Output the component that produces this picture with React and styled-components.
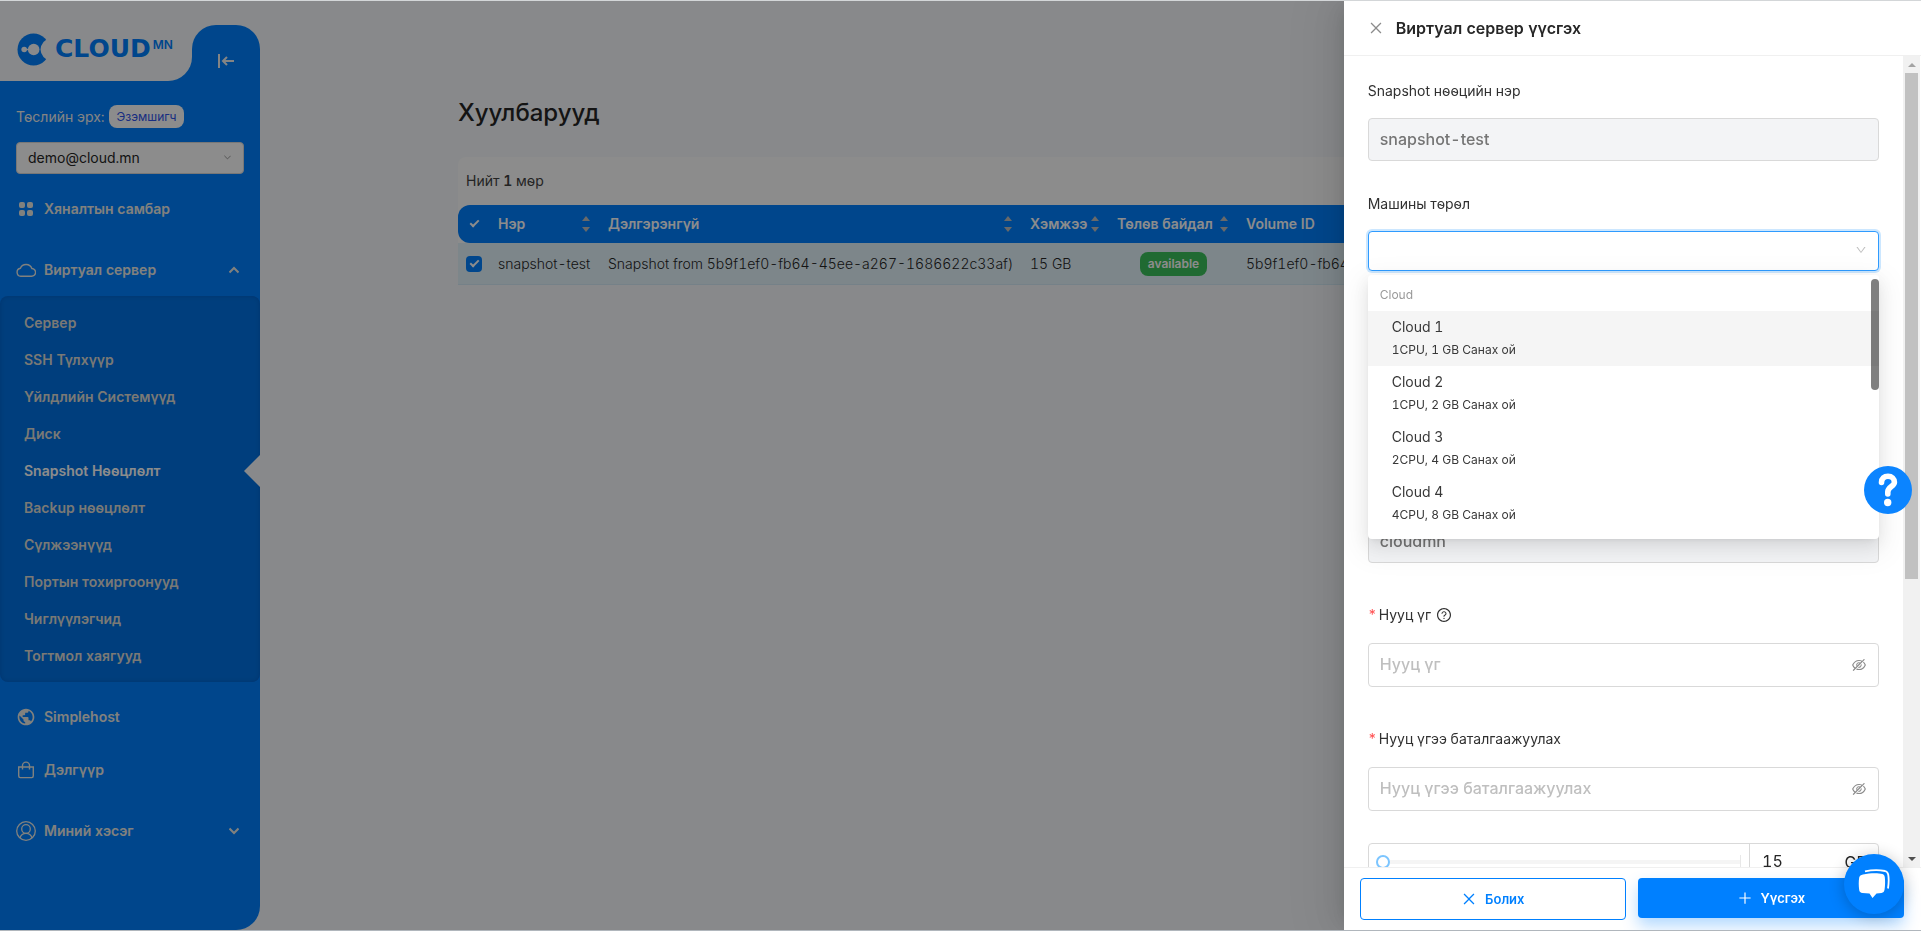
import React from "react";
import styled, { createGlobalStyle, css } from "styled-components";
import {
  AiOutlineClose,
  AiOutlineDown,
  AiOutlineEyeInvisible,
  AiOutlinePlus,
  AiOutlineQuestionCircle,
} from "react-icons/ai";
import { MdPublic } from "react-icons/md";

const blue = "#0080ff";
const pageBg = "#f7fafd";

const GlobalStyle = createGlobalStyle`
  *, *::before, *::after { box-sizing: border-box; }
  body {
    margin: 0;
    background: ${pageBg};
    font-family: Inter, "Noto Sans", sans-serif;
    font-size: 14px;
    font-variant-numeric: tabular-nums;
    line-height: 22px;
    color: #262626;
    overflow: hidden;
  }
  button, input, select { font: inherit; color: inherit; }
  svg { display: block; flex: none; }
`;

const Page = styled.div`
  display: flex;
  height: 100vh;
  padding: 1px 0;
  overflow: hidden;
`;

const EdgeLine = styled.div`
  position: fixed;
  left: 0;
  right: 0;
  z-index: 30;
  height: 1px;
  background: ${(p) => p.$color};
  ${(p) => (p.$bottom ? "bottom: 0;" : "top: 0;")}
`;

/* ---------- Sidebar ---------- */

const Sidebar = styled.aside`
  display: flex;
  flex-direction: column;
  flex: none;
  width: 260px;
`;

const SidebarTop = styled.div`
  display: flex;
  align-items: flex-end;
  height: 80px;
`;

const LogoCorner = styled.div`
  flex: 1;
  height: 100%;
  background: linear-gradient(${pageBg} 50%, ${blue} 50%);
`;

const Logo = styled.a`
  display: flex;
  align-items: center;
  height: 100%;
  padding: 16px 0 0 17px;
  background: ${pageBg};
  border-bottom-right-radius: 24px;
  color: ${blue};
  text-decoration: none;
`;

const LogoWord = styled.span`
  margin-left: 5px;
  font-family: "DejaVu Sans", sans-serif;
  font-size: 25px;
  font-weight: 700;
  line-height: 32px;
`;

const LogoSuffix = styled.span`
  margin: 0 0 8px 2px;
  font-size: 12px;
  font-weight: 600;
  line-height: 12px;
`;

const CollapseTab = styled.button`
  display: flex;
  align-items: center;
  justify-content: center;
  width: 68px;
  height: 56px;
  padding: 16px 0 0;
  border: 0;
  border-radius: 24px 24px 0 0;
  background: ${blue};
  color: #f0f0f0;
`;

const SidebarBody = styled.div`
  flex: 1;
  padding-top: 24px;
  background: ${blue};
  border-bottom-right-radius: 24px;
`;

const RoleRow = styled.div`
  display: flex;
  align-items: center;
  gap: 4px;
  padding: 0 16px;
  color: #f0f0f0;
`;

const RoleBadge = styled.span`
  padding: 0 8px;
  border-radius: 8px;
  background: #fff;
  color: #2f54eb;
  font-size: 12px;
  line-height: 23px;
`;

const ProjectBox = styled.div`
  position: relative;
  margin: 14px 16px 8px;
  color: #737373;
  svg {
    position: absolute;
    right: 13px;
    top: 12px;
    pointer-events: none;
  }
`;

const ProjectSelect = styled.select`
  display: block;
  appearance: none;
  width: 100%;
  height: 32px;
  padding: 0 11px;
  border: 1px solid #d9d9d9;
  border-radius: 4px;
  background: #fff;
  color: #262626;
`;

const NavLink = styled.a`
  display: flex;
  align-items: center;
  gap: 8px;
  height: 53px;
  padding: 0 21px 0 16px;
  color: #ecebe6;
  font-weight: 600;
  text-decoration: none;
  span { flex: 1; }
`;

const NavGroup = styled.div`
  margin: 8px 0;
`;

const SubMenu = styled.div`
  padding: 8px 0;
  border-radius: 8px;
  background: #0072e3;
  box-shadow: inset 0 0 4px rgba(0, 40, 120, 0.25);
`;

const SubLink = styled.a`
  display: flex;
  align-items: center;
  justify-content: space-between;
  height: 37px;
  padding-left: 24px;
  color: ${(p) => (p.$active ? "#fff" : "#dedcd6")};
  font-weight: 600;
  text-decoration: none;
  &::after {
    content: "";
    display: ${(p) => (p.$active ? "block" : "none")};
    border: 16px solid transparent;
    border-left-width: 0;
    border-right-color: ${pageBg};
  }
`;

/* ---------- Main table ---------- */

const Main = styled.main`
  flex: 1;
  min-width: 0;
  padding: 96px 198px 0;
`;

const Title = styled.h1`
  margin: 0 0 28px;
  font-size: 24px;
  font-weight: 500;
  line-height: 32px;
`;

const Card = styled.section`
  overflow: hidden;
  border-radius: 8px 8px 0 0;
  background: #fff;
`;

const Count = styled.p`
  margin: 0;
  padding: 13px 8px;
  color: #434343;
  b { font-weight: 600; }
`;

const Table = styled.table`
  width: 100%;
  border-collapse: separate;
  border-spacing: 0;
  table-layout: fixed;
  text-align: left;
`;

const Col = styled.col`
  width: ${(p) => (p.$w ? p.$w + "px" : "auto")};
`;

const Th = styled.th`
  height: 38px;
  padding: 0 10px 0 8px;
  background: ${blue};
  color: #fff;
  font-weight: 600;
  white-space: nowrap;
  &:first-child { border-radius: 12px 0 0 12px; padding-right: 8px; }
  &:last-child { border-radius: 0 12px 12px 0; }
`;

const ThInner = styled.div`
  display: flex;
  align-items: center;
  justify-content: space-between;
`;

const Sorter = styled.span`
  display: grid;
  gap: 6px;
  color: #bfbfbf;
  &::before, &::after {
    content: "";
    border: 4px solid transparent;
  }
  &::before { border-top: 0; border-bottom: 5px solid; }
  &::after { border-bottom: 0; border-top: 5px solid; }
`;

const Td = styled.td`
  height: 42px;
  padding: 0 8px;
  border-bottom: 1px solid #d5ecf7;
  background: #e4f4fb;
  color: #262626;
  font-weight: 300;
  white-space: nowrap;
  text-align: ${(p) => (p.$center ? "center" : "left")};
`;

const Tick = styled.input`
  display: flex;
  justify-content: center;
  appearance: none;
  width: 16px;
  height: 16px;
  margin: 0;
  border-radius: 4px;
  background: ${blue};
  &::after {
    content: "";
    width: 5px;
    height: 9px;
    margin-top: 2px;
    border: solid #fff;
    border-width: 0 2px 2px 0;
    transform: rotate(45deg);
  }
`;

const Status = styled.span`
  display: inline-block;
  padding: 0 8px;
  border-radius: 8px;
  background: #3bc25b;
  color: #fff;
  font-size: 12px;
  font-weight: 600;
  line-height: 24px;
`;

/* ---------- Drawer ---------- */

const Mask = styled.div`
  position: fixed;
  inset: 0;
  z-index: 10;
  background: rgba(0, 0, 0, 0.45);
`;

const Drawer = styled.section`
  position: fixed;
  top: 1px;
  right: 0;
  bottom: 1px;
  z-index: 20;
  display: flex;
  flex-direction: column;
  width: calc(30% + 1px);
  min-width: 400px;
  background: #fff;
  box-shadow: -6px 0 16px -8px rgba(0, 0, 0, 0.12), -9px 0 28px rgba(0, 0, 0, 0.08),
    -12px 0 48px 16px rgba(0, 0, 0, 0.05);
`;

const DrawerHead = styled.header`
  display: flex;
  align-items: center;
  gap: 12px;
  flex: none;
  height: 55px;
  padding: 0 24px;
  border-bottom: 1px solid #f0f0f0;
  h2 {
    margin: 0;
    font-size: 16px;
    font-weight: 600;
  }
`;

const CloseButton = styled.button`
  padding: 0;
  border: 0;
  background: none;
  color: #8c8c8c;
`;

const DrawerMain = styled.div`
  display: flex;
  flex: 1;
  min-height: 0;
`;

const Form = styled.form`
  flex: 1;
  min-width: 0;
  padding: 24px 24px 0;
  overflow: hidden;
`;

const Scrollbar = styled.div`
  display: flex;
  flex-direction: column;
  align-items: center;
  flex: none;
  width: 17px;
  margin-right: 1px;
  padding: 7px 0 6px;
  background: #f1f1f1;
`;

const ScrollArrow = styled.i`
  border: 4px solid transparent;
  ${(p) =>
    p.$down
      ? css`border-bottom: 0; border-top-color: #505050;`
      : css`border-top: 0; border-bottom-color: #a3a3a3;`}
`;

const ScrollTrack = styled.div`
  flex: 1;
  width: 13px;
  margin: 6px 0;
  &::before {
    content: "";
    display: block;
    height: 65%;
    background: #c1c1c1;
  }
`;

const Field = styled.div`
  position: relative;
  margin-bottom: ${(p) => (p.$menuOpen ? 249 : 32)}px;
`;

const labelStyles = css`
  display: flex;
  align-items: center;
  gap: 5px;
  color: #303030;
`;

const Label = styled.label`
  ${labelStyles}
  height: 22px;
  margin-bottom: 16px;
`;

const RequiredLabel = styled.label`
  ${labelStyles}
  height: 40px;
  margin-bottom: 8px;
  &::before {
    content: "*";
    width: 6px;
    color: #ff4d4f;
  }
`;

const InputBox = styled.div`
  display: flex;
  align-items: center;
  height: ${(p) => (p.$disabled ? 43 : 44)}px;
  padding: 0 11px;
  border: 1px solid #d9d9d9;
  border-radius: 4px;
  background: ${(p) => (p.$disabled ? "#f3f4f6" : "#fff")};
  color: #8c8c8c;
`;

const Input = styled.input`
  flex: 1;
  min-width: 0;
  width: 100%;
  padding: 0 0 2px;
  border: 0;
  outline: 0;
  background: none;
  font-size: 16px;
  line-height: 20px;
  color: #262626;
  &:disabled { color: #757575; font-weight: 500; }
  &::placeholder { color: #bfbfbf; opacity: 1; font-weight: 500; }
`;

const EyeButton = styled.button`
  padding: 0;
  border: 0;
  background: none;
  color: #8c8c8c;
`;

const TypeBox = styled.div`
  position: relative;
  color: #bfbfbf;
  svg {
    position: absolute;
    right: 12px;
    top: 13px;
    pointer-events: none;
  }
`;

const TypeSelect = styled.select`
  display: block;
  appearance: none;
  width: 100%;
  height: 40px;
  border: 1px solid #2f9bff;
  border-radius: 4px;
  outline: 0;
  background: #fff;
  box-shadow: 0 0 0 2px rgba(24, 144, 255, 0.22);
`;

const Menu = styled.div`
  position: absolute;
  top: calc(100% + 4px);
  left: 0;
  right: 0;
  z-index: 2;
  height: 264px;
  padding: 4px 0;
  overflow: hidden;
  border-radius: 4px;
  background: #fff;
  box-shadow: 0 3px 6px -4px rgba(0, 0, 0, 0.12), 0 6px 16px rgba(0, 0, 0, 0.08),
    0 9px 28px 8px rgba(0, 0, 0, 0.05);
  &::after {
    content: "";
    position: absolute;
    top: 4px;
    right: 0;
    width: 8px;
    height: 111px;
    border-radius: 4px;
    background: rgba(0, 0, 0, 0.5);
  }
`;

const MenuGroup = styled.div`
  padding: 5px 12px;
  color: #999;
  font-size: 12px;
`;

const MenuOption = styled.div`
  height: 55px;
  padding: 5px 24px;
  background: ${(p) => (p.$active ? "#f5f5f5" : "#fff")};
  color: #383838;
  small {
    display: block;
    font-size: 12px;
    line-height: 24px;
  }
`;

const SizeRow = styled.div`
  display: grid;
  grid-template-columns: 1fr 129px;
  height: 43px;
  border: 1px solid #d9d9d9;
  border-radius: 4px;
`;

const RangeWrap = styled.div`
  display: flex;
  align-items: center;
  padding: 0 8px 6px 7px;
`;

const Range = styled.input`
  appearance: none;
  width: 100%;
  height: 14px;
  margin: 0;
  border-right: 1px solid #e8e8e8;
  background: linear-gradient(#f5f5f5, #f5f5f5) center / 100% 4px no-repeat;
  &::-webkit-slider-thumb {
    appearance: none;
    width: 14px;
    height: 14px;
    border: 2px solid #7cc5ff;
    border-radius: 50%;
    background: #fff;
  }
`;

const SizeValue = styled.label`
  display: flex;
  align-items: center;
  padding: 0 11px 6px 12px;
  border-left: 1px solid #d9d9d9;
  font-size: 16px;
  line-height: 20px;
`;

const DrawerFoot = styled.footer`
  display: grid;
  grid-template-columns: 1fr 1fr;
  gap: 12px;
  align-items: start;
  flex: none;
  height: 63px;
  padding: 10px 17px 0 16px;
  border-top: 1px solid #f0f0f0;
`;

const FootButton = styled.button`
  display: flex;
  align-items: center;
  justify-content: center;
  gap: 8px;
  height: ${(p) => (p.$primary ? 40 : 42)}px;
  padding: 0;
  border: ${(p) => (p.$primary ? "0" : "1px solid " + blue)};
  border-radius: 4px;
  background: ${(p) => (p.$primary ? blue : "#fff")};
  box-shadow: ${(p) => (p.$primary ? "0 8px 16px rgba(0, 128, 255, 0.3)" : "none")};
  color: ${(p) => (p.$primary ? "#fff" : blue)};
  font-size: 13px;
  font-weight: 600;
`;

const FloatButton = styled.button`
  position: fixed;
  z-index: 40;
  display: grid;
  place-items: center;
  width: ${(p) => p.$size}px;
  height: ${(p) => p.$size}px;
  padding: 0;
  border: 0;
  border-radius: 50%;
  color: #fff;
`;

const HelpButton = styled(FloatButton)`
  top: 50%;
  right: 9px;
  background: #0b84ff;
`;

const ChatButton = styled(FloatButton)`
  right: 17px;
  bottom: 17px;
  background: ${blue};
  box-shadow: 0 2px 16px rgba(0, 0, 0, 0.24);
`;

/* ---------- Drawings ---------- */

const LogoMark = () => (
  <svg width="33" height="33" viewBox="0 0 33 33">
    <circle cx="16.5" cy="16.5" r="16" fill="currentColor" />
    <path d="M34 1 29.6 6.5 26.5 9Q20.500 16.5 26.5 24L29.6 26.5 34 32Z" fill={pageBg} />
    <circle cx="16.7" cy="16.5" r="5.8" fill={pageBg} />
    <circle cx="7.2" cy="16.5" r="2.8" fill={pageBg} />
    <path d="M8 16.5H13" stroke={pageBg} strokeWidth="1.4" />
  </svg>
);

const CollapseIcon = () => (
  <svg width="16" height="14" viewBox="0 0 16 14" fill="none" stroke="currentColor" strokeWidth="2">
    <path d="M1 0V14M16 7H5M9 3L5 7L9 11" />
  </svg>
);

const Chevron = ({ up, size = 10, width = 2 }) => (
  <svg width={size} height={size} viewBox="0 0 10 10" fill="none" stroke="currentColor" strokeWidth={width}>
    <path d={up ? "M.5 7.5 5 3 9.5 7.5" : "M.5 2.5 5 7 9.5 2.5"} />
  </svg>
);

const GridIcon = () => (
  <svg width="20" height="20" viewBox="0 0 20 20" fill="currentColor">
    <rect x="3" y="3" width="6" height="6" rx="2" />
    <rect x="11" y="3" width="6" height="6" rx="2" />
    <rect x="3" y="11" width="6" height="6" rx="2" />
    <rect x="11" y="11" width="6" height="6" rx="2" />
  </svg>
);

const CloudIcon = () => (
  <svg width="20" height="20" viewBox="0 0 20 20" fill="none" stroke="currentColor" strokeWidth="1.4">
    <path d="M4.8 16.3h10.6a3.9 3.9 0 0 0 .5-7.8 6.2 6.2 0 0 0-11.5-.3A4.1 4.1 0 0 0 4.8 16.3Z" />
  </svg>
);

const BagIcon = () => (
  <svg width="20" height="20" viewBox="0 0 20 20" fill="none" stroke="currentColor" strokeWidth="1.4">
    <path d="M2.7 7H17.3V15.8Q17.3 17.6 15.8 17.6H4.2Q2.7 17.6 2.7 15.8ZM6.5 9.5V5.6a3.5 3.5 0 0 1 7 0V9.5" />
  </svg>
);

const UserIcon = () => (
  <svg width="20" height="20" viewBox="0 0 20 20" fill="none" stroke="currentColor" strokeWidth="1.3">
    <circle cx="10" cy="10" r="9.3" />
    <circle cx="10" cy="8" r="4.3" />
    <path d="M4 17Q5.4 12.4 10 12.4T16 17" />
  </svg>
);

const HelpGlyph = () => (
  <svg width="20" height="34" viewBox="0 0 20 34" fill="none" stroke="currentColor">
    <path d="M3.5 9.5C3.5 5.5 6.2 3.3 10 3.3S16.4 5.8 16.4 9.2C16.4 13.5 9.8 13.8 9.8 19V21" strokeWidth="5.6" strokeLinecap="round" />
    <circle cx="9.7" cy="29.5" r="3.7" fill="currentColor" stroke="none" />
  </svg>
);

const ChatGlyph = () => (
  <svg width="32" height="32" viewBox="0 0 32 32" fill="currentColor">
    <path d="M5 6.5C12 5 20 5 24.5 6Q26.5 6.5 26.8 9C27.3 13 27.2 18 26.5 22Q26.3 24.5 23.5 25L18.5 25.6 14.5 30 11.5 25.6 4.5 25Q1.5 24.6 1.2 22C.6 18 .6 13 1.2 9.5Q1.7 7 5 6.5Z" />
    <path d="M7 3.4C14 1.8 22 1.9 27 3Q29.7 3.7 30.2 6.5C31 11 30.7 16 30 20.5" fill="none" stroke="currentColor" strokeWidth="1.8" />
  </svg>
);

/* ---------- Data ---------- */

const subItems = [
  "Сервер",
  "SSH Түлхүүр",
  "Үйлдлийн Системүүд",
  "Диск",
  "Snapshot Нөөцлөлт",
  "Backup нөөцлөлт",
  "Сүлжээнүүд",
  "Портын тохиргоонууд",
  "Чиглүүлэгчид",
  "Тогтмол хаягууд",
];

const columns = ["Нэр", "Дэлгэрэнгүй", "Хэмжээ", "Төлөв байдал"];

const machineTypes = [
  ["Cloud 1", "1CPU, 1 GB Санах ой"],
  ["Cloud 2", "1CPU, 2 GB Санах ой"],
  ["Cloud 3", "2CPU, 4 GB Санах ой"],
  ["Cloud 4", "4CPU, 8 GB Санах ой"],
];

const PasswordField = ({ id, label, help }) => (
  <Field>
    <RequiredLabel htmlFor={id}>
      {label}
      {help && <AiOutlineQuestionCircle size={16} />}
    </RequiredLabel>
    <InputBox>
      <Input id={id} type="password" placeholder={label} />
      <EyeButton type="button" aria-label={label}>
        <AiOutlineEyeInvisible size={16} />
      </EyeButton>
    </InputBox>
  </Field>
);

export default function App() {
  return (
    <>
      <GlobalStyle />
      <Page>
        <Sidebar>
          <SidebarTop>
            <LogoCorner>
              <Logo href="#">
                <LogoMark />
                <LogoWord>CLOUD</LogoWord>
                <LogoSuffix>MN</LogoSuffix>
              </Logo>
            </LogoCorner>
            <CollapseTab aria-label="Menu">
              <CollapseIcon />
            </CollapseTab>
          </SidebarTop>
          <SidebarBody>
            <RoleRow>
              Төслийн эрх: <RoleBadge>Эзэмшигч</RoleBadge>
            </RoleRow>
            <ProjectBox>
              <ProjectSelect aria-label="Project" defaultValue="demo">
                <option value="demo">demo@cloud.mn</option>
              </ProjectSelect>
              <Chevron size={7} width={1} />
            </ProjectBox>
            <nav>
              <NavLink href="#"><GridIcon /><span>Хяналтын самбар</span></NavLink>
              <NavGroup>
                <NavLink href="#"><CloudIcon /><span>Виртуал сервер</span><Chevron up /></NavLink>
                <SubMenu>
                  {subItems.map((text, i) => (
                    <SubLink href="#" key={text} $active={i === 4}>{text}</SubLink>
                  ))}
                </SubMenu>
              </NavGroup>
              <NavLink href="#"><MdPublic size={20} /><span>Simplehost</span></NavLink>
              <NavLink href="#"><BagIcon /><span>Дэлгүүр</span></NavLink>
              <NavGroup>
                <NavLink href="#"><UserIcon /><span>Миний хэсэг</span><Chevron /></NavLink>
              </NavGroup>
            </nav>
          </SidebarBody>
        </Sidebar>

        <Main>
          <Title>Хуулбарууд</Title>
          <Card>
            <Count>Нийт <b>1</b> мөр</Count>
            <Table>
              <colgroup>
                <Col $w={32} /><Col $w={110} /><Col $w={422} /><Col $w={87} /><Col $w={129} /><Col />
              </colgroup>
              <thead>
                <tr>
                  <Th><Tick type="checkbox" defaultChecked aria-label="Select all" /></Th>
                  {columns.map((name) => (
                    <Th key={name}><ThInner>{name}<Sorter /></ThInner></Th>
                  ))}
                  <Th>Volume ID</Th>
                </tr>
              </thead>
              <tbody>
                <tr>
                  <Td><Tick type="checkbox" defaultChecked aria-label="snapshot-test" /></Td>
                  <Td>snapshot-test</Td>
                  <Td>Snapshot from 5b9f1ef0-fb64-45ee-a267-1686622c33af)</Td>
                  <Td>15 GB</Td>
                  <Td $center><Status>available</Status></Td>
                  <Td>5b9f1ef0-fb64-45ee-a267-1686622c33af</Td>
                </tr>
              </tbody>
            </Table>
          </Card>
        </Main>
      </Page>

      <Mask />

      <Drawer role="dialog" aria-labelledby="drawer-title">
        <DrawerHead>
          <CloseButton aria-label="Close"><AiOutlineClose size={16} /></CloseButton>
          <h2 id="drawer-title">Виртуал сервер үүсгэх</h2>
        </DrawerHead>
        <DrawerMain>
          <Form>
            <Field>
              <Label htmlFor="snapshot">Snapshot нөөцийн нэр</Label>
              <InputBox $disabled><Input id="snapshot" disabled defaultValue="snapshot-test" /></InputBox>
            </Field>
            <Field $menuOpen>
              <Label htmlFor="machine">Машины төрөл</Label>
              <TypeBox>
                <TypeSelect id="machine"><option value="" /></TypeSelect>
                <AiOutlineDown size={12} />
              </TypeBox>
              <Menu role="listbox" aria-label="Машины төрөл">
                <MenuGroup>Cloud</MenuGroup>
                {machineTypes.map(([name, spec], i) => (
                  <MenuOption role="option" aria-selected={i === 0} key={name} $active={i === 0}>
                    {name}
                    <small>{spec}</small>
                  </MenuOption>
                ))}
              </Menu>
            </Field>
            <Field>
              <InputBox $disabled><Input aria-label="User" disabled defaultValue="cloudmn" /></InputBox>
            </Field>
            <PasswordField id="password" label="Нууц үг" help />
            <PasswordField id="confirm" label="Нууц үгээ баталгаажуулах" />
            <SizeRow>
              <RangeWrap><Range type="range" min="15" max="1000" defaultValue="15" aria-label="GB" /></RangeWrap>
              <SizeValue><Input aria-label="Size" defaultValue="15" />GB</SizeValue>
            </SizeRow>
          </Form>
          <Scrollbar aria-hidden="true">
            <ScrollArrow />
            <ScrollTrack />
            <ScrollArrow $down />
          </Scrollbar>
        </DrawerMain>
        <DrawerFoot>
          <FootButton><AiOutlineClose size={16} />Болих</FootButton>
          <FootButton $primary><AiOutlinePlus size={16} />Үүсгэх</FootButton>
        </DrawerFoot>
      </Drawer>

      <HelpButton $size={48} aria-label="Help"><HelpGlyph /></HelpButton>
      <ChatButton $size={60} aria-label="Chat"><ChatGlyph /></ChatButton>
      <EdgeLine $color="#d3d6d8" />
      <EdgeLine $color="#b0b6bc" $bottom />
    </>
  );
}
